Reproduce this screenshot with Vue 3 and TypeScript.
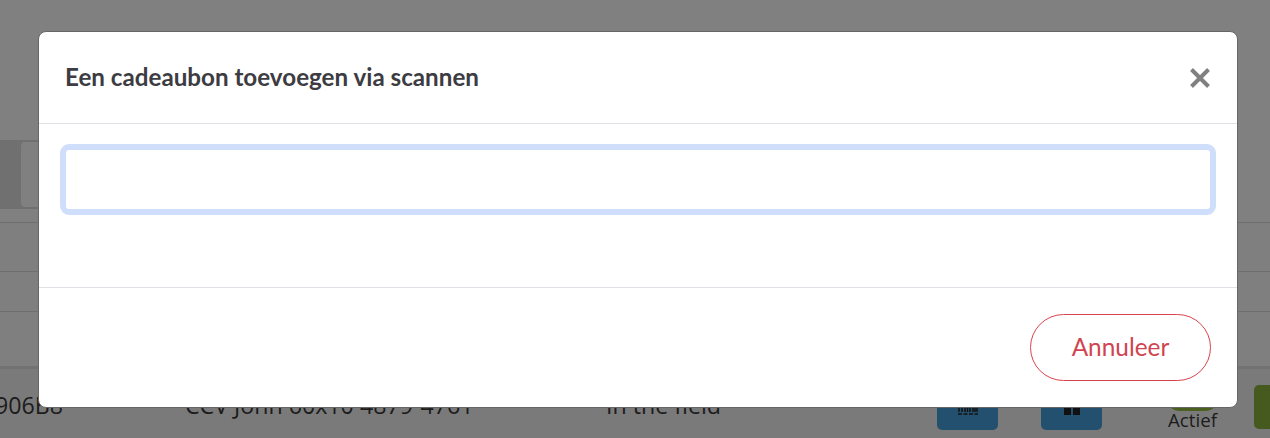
<script setup lang="ts">
const rows = [49, 40, 57];
</script>

<template>
  <div class="page">
    <div class="bg">
      <div class="top"></div>
      <div class="toolbar"><div class="tool-box"></div></div>
      <div class="gap"></div>
      <div v-for="(h, i) in rows" :key="i" class="line-row" :style="{ height: h + 'px' }"></div>
      <div class="data-row">
        <span class="cell code">906B8</span>
        <span class="cell name">CCV John 60x10 4879-4761</span>
        <span class="cell place">In the field</span>
        <div class="btn-blue first">
          <svg width="20" height="9" viewBox="0 0 20 9"><path d="M1 0v6M4 0v6M7 0v6M9.500 0v6M12 0v6M15 0v6M17 0v6M19 0v6" stroke="#111" stroke-width="1.500"/><path d="M0 8h20" stroke="#111" stroke-width="1.300" stroke-dasharray="4 1.500"/></svg>
        </div>
        <div class="btn-blue second">
          <svg width="16" height="8" viewBox="0 0 16 8"><rect x="0" y="0" width="7" height="8" fill="#111"/><rect x="9" y="0" width="7" height="8" fill="#111"/></svg>
        </div>
        <div class="status"><div class="pill"></div><span>Actief</span></div>
        <div class="btn-green"></div>
      </div>
    </div>

    <div class="modal">
      <header class="modal-head">
        <h5>Een cadeaubon toevoegen via scannen</h5>
        <button class="close" type="button" aria-label="Sluiten">
          <svg width="20" height="20" viewBox="0 0 20 20"><path d="M1.500 1.500l17 17M18.500 1.500l-17 17" stroke="#808080" stroke-width="4"/></svg>
        </button>
      </header>
      <div class="modal-body">
        <input class="scan" type="text" />
      </div>
      <footer class="modal-foot">
        <button class="cancel" type="button">Annuleer</button>
      </footer>
    </div>
  </div>
</template>

<style scoped>
.page {
  position: relative;
  width: 1270px;
  height: 438px;
  overflow: hidden;
  background: #808080;
  font-family: "Open Sans", "Noto Sans", sans-serif;
}
.bg {
  display: flex;
  flex-direction: column;
}
.top {
  height: 140px;
}
.toolbar {
  width: 300px;
  height: 69px;
  background: #707070;
  padding: 2px 0 2px 21px;
  box-sizing: border-box;
}
.tool-box {
  width: 40px;
  height: 65px;
  background: #808080;
  border-radius: 4px;
}
.gap {
  height: 14px;
  border-bottom: 1px solid #6e6e6e;
  box-sizing: border-box;
}
.line-row {
  border-bottom: 1px solid #6e6e6e;
  box-sizing: border-box;
  background: #7f7f7f;
}
.line-row:nth-child(6) {
  border-bottom: 3px solid #727272;
}
.data-row {
  position: relative;
  height: 69px;
  background: #7a7a7a;
  color: #1c1c1c;
  font-size: 23.2px;
}
.cell {
  position: absolute;
  top: 22px;
  line-height: 28px;
  white-space: nowrap;
}
.code { left: -5px; }
.name { left: 185px; }
.place { left: 606px; }
.btn-blue {
  position: absolute;
  top: 17px;
  width: 61px;
  height: 44px;
  background: #24506f;
  border-radius: 5px;
  display: flex;
  justify-content: center;
  align-items: flex-end;
  padding-bottom: 15px;
  box-sizing: border-box;
}
.btn-blue.first { left: 937px; }
.btn-blue.second { left: 1041px; }
.status {
  position: absolute;
  left: 1166px;
  top: 26px;
  width: 53px;
  text-align: center;
  font-size: 18.7px;
  line-height: 17px;
}
.pill {
  height: 16px;
  background: #4b5f1f;
  border-radius: 0 0 14px 14px;
}
.btn-green {
  position: absolute;
  left: 1254px;
  top: 16px;
  width: 40px;
  height: 44px;
  background: #465a20;
  border-radius: 5px;
}

.modal {
  position: absolute;
  left: 38px;
  top: 31px;
  width: 1200px;
  height: 377px;
  box-sizing: border-box;
  background: #fff;
  border: 1px solid #666;
  border-radius: 8px;
  display: flex;
  flex-direction: column;
  font-family: Lato, "Open Sans", sans-serif;
}
.modal-head {
  height: 92px;
  flex: none;
  box-sizing: border-box;
  border-bottom: 1px solid #dee2e6;
  display: flex;
  align-items: center;
  justify-content: space-between;
  padding: 0 27px 0 26px;
}
.modal-head h5 {
  margin: 0 0 2px;
  font-size: 24.2px;
  font-weight: 700;
  color: #3c3c42;
  line-height: 1.2;
}
.close {
  border: 0;
  background: none;
  padding: 0;
  width: 20px;
  height: 20px;
  display: block;
}
.modal-body {
  height: 164px;
  flex: none;
  box-sizing: border-box;
  border-bottom: 1px solid #dee2e6;
  padding: 20px 21px 0;
}
.scan {
  display: block;
  width: 100%;
  height: 71px;
  box-sizing: border-box;
  border: 6px solid #cfdffb;
  border-radius: 9px;
  outline: 0;
  background: #fff;
}
.modal-foot {
  flex: 1;
  display: flex;
  justify-content: flex-end;
  align-items: flex-start;
  padding: 26px 26px 0;
}
.cancel {
  width: 181px;
  height: 67px;
  box-sizing: border-box;
  border: 1px solid #d9434f;
  border-radius: 34px;
  background: #fff;
  color: #d0444f;
  font-family: inherit;
  font-size: 24.4px;
  padding: 0 0 2px;
}
</style>
